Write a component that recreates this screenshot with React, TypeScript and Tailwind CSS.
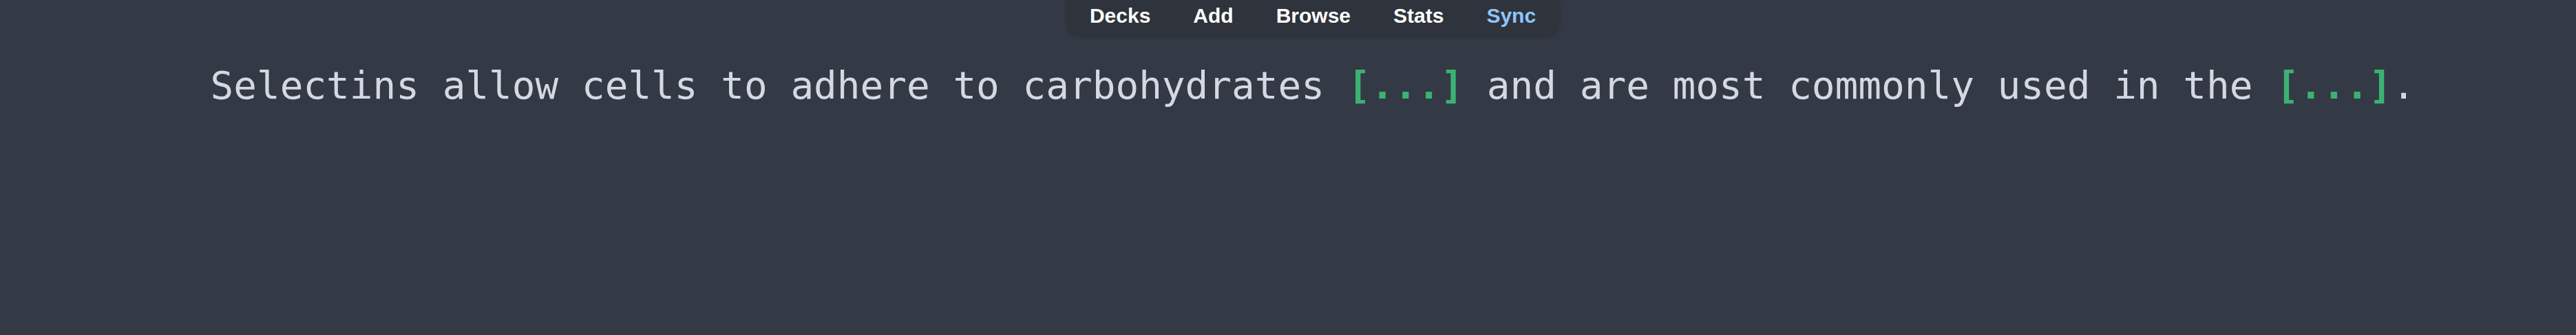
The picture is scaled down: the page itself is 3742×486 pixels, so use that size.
const navItems = ["Decks", "Add", "Browse", "Stats", "Sync"];

function Cloze() {
	return <span className="font-bold text-[#3bb273]">[...]</span>;
}

export default function App() {
	return (
		<div className="min-h-[486px] w-full bg-[#343a45] pl-[72px]">
			{/* Top toolbar */}
			<div className="flex justify-center">
				<nav className="flex h-[52px] items-start rounded-b-[18px] bg-[#2f333b] px-[3px] pt-[3px] shadow-[0_2px_6px_rgba(0,0,0,0.15)]">
					{navItems.map((item) => (
						<button
							key={item}
							className={`px-[31px] font-['Liberation_Sans',Arial,sans-serif] text-[30px] font-bold leading-[40px] ${
								item === "Sync" ? "text-[#8ec5ff]" : "text-white"
							}`}
						>
							{item}
						</button>
					))}
				</nav>
			</div>

			{/* Card text */}
			<div className="mt-[40px] text-center font-['DejaVu_Sans_Mono',monospace] text-[56px] leading-[64px] text-[#d4d8e2]">
				Selectins allow cells to adhere to carbohydrates <Cloze /> and are most commonly used in the <Cloze />.
			</div>
		</div>
	);
}
